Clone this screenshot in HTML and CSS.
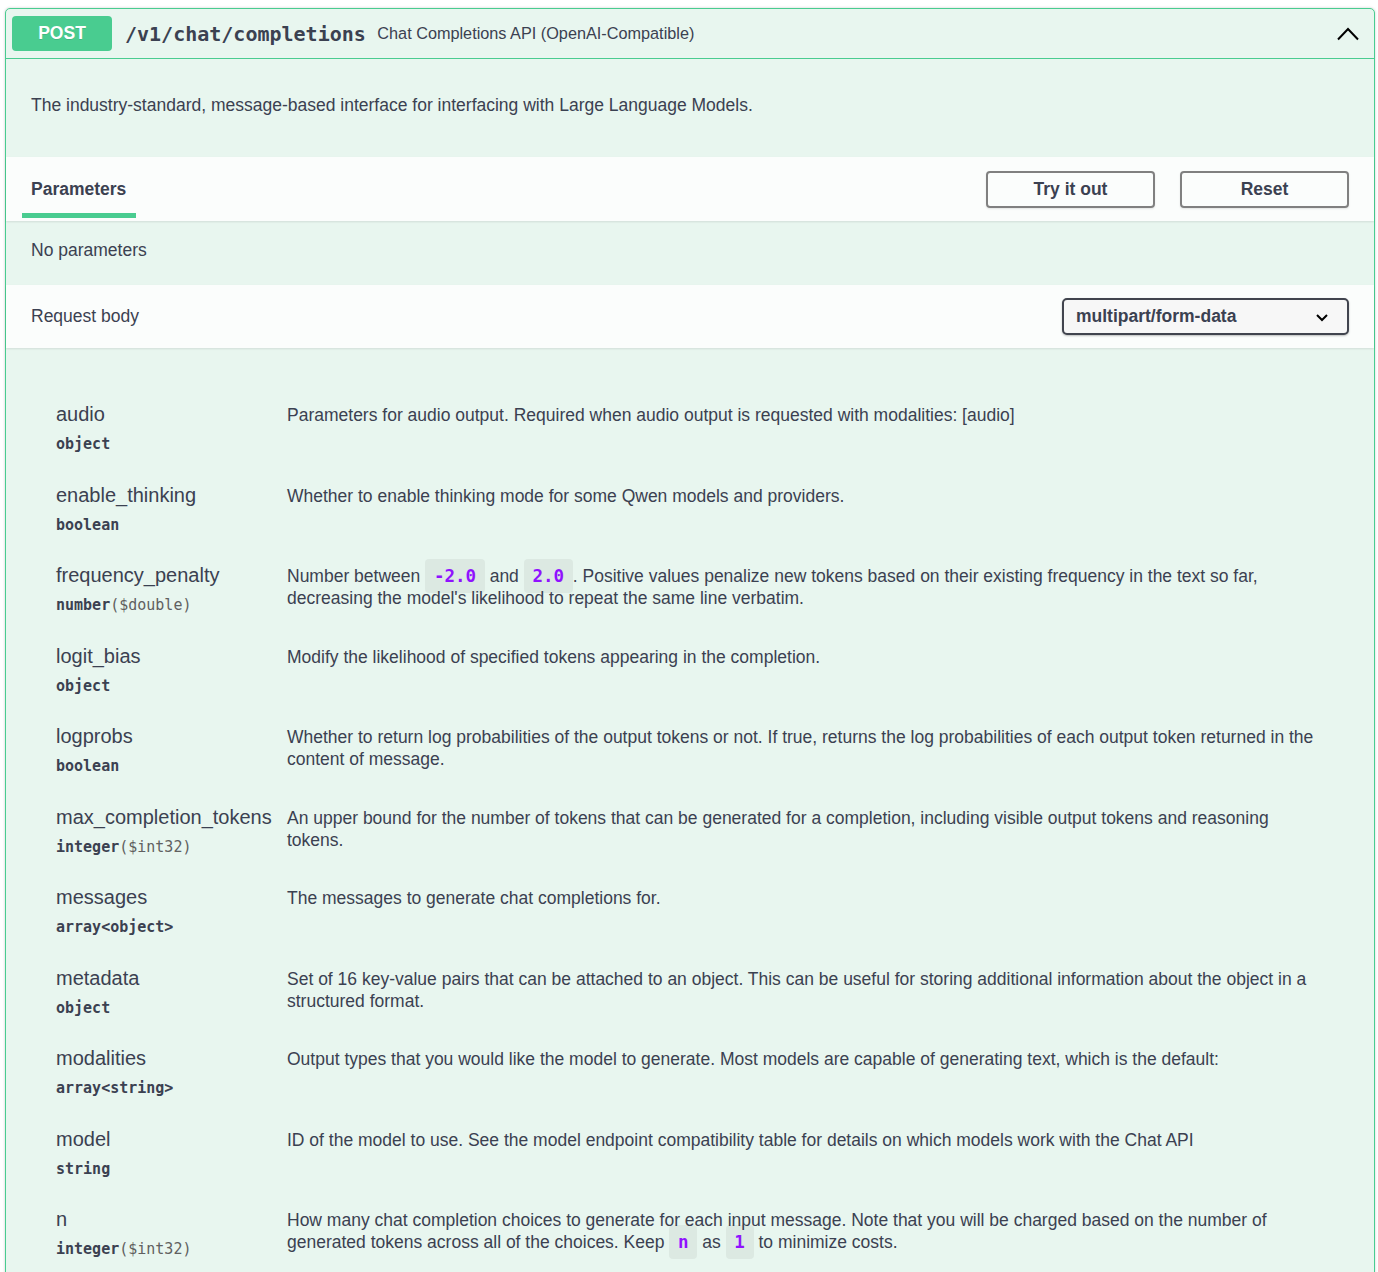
FILE: index.html
```html
<!DOCTYPE html>
<html>
<head>
<meta charset="utf-8">
<link rel="stylesheet" href="styles.css">
</head>
<body>
<div class="opblock">
  <div class="summary">
    <span class="method">POST</span>
    <span class="path">/v1/chat/completions</span>
    <span class="summary-desc">Chat Completions API (OpenAI-Compatible)</span>
    <svg class="arrow" width="24" height="16" viewBox="0 0 24 16"><polyline points="2,13.5 12,3 22,13.5" fill="none" stroke="#000" stroke-width="2"/></svg>
  </div>
  <div class="desc-wrapper">
    <p>The industry-standard, message-based interface for interfacing with Large Language Models.</p>
  </div>
  <div class="section-header">
    <div class="tab"><span class="tab-label">Parameters</span></div>
    <div class="btns">
      <button class="btn">Try it out</button>
      <button class="btn">Reset</button>
    </div>
  </div>
  <div class="no-params">No parameters</div>
  <div class="section-header rb">
    <div class="rb-title">Request body</div>
    <div class="select">
      <span>multipart/form-data</span>
      <svg width="14" height="10" viewBox="0 0 14 10"><polyline points="2,3 7,8 12,3" fill="none" stroke="#000" stroke-width="2"/></svg>
    </div>
  </div>
  <div class="props">
    <div class="row">
      <div class="pname"><div class="n">audio</div><div class="t">object</div></div>
      <div class="pdesc">Parameters for audio output. Required when audio output is requested with modalities: [audio]</div>
    </div>
    <div class="row">
      <div class="pname"><div class="n">enable_thinking</div><div class="t">boolean</div></div>
      <div class="pdesc">Whether to enable thinking mode for some Qwen models and providers.</div>
    </div>
    <div class="row">
      <div class="pname"><div class="n">frequency_penalty</div><div class="t">number<span class="fmt">($double)</span></div></div>
      <div class="pdesc">Number between <code>-2.0</code> and <code>2.0</code>. Positive values penalize new tokens based on their existing frequency in the text so far, decreasing the model's likelihood to repeat the same line verbatim.</div>
    </div>
    <div class="row">
      <div class="pname"><div class="n">logit_bias</div><div class="t">object</div></div>
      <div class="pdesc">Modify the likelihood of specified tokens appearing in the completion.</div>
    </div>
    <div class="row">
      <div class="pname"><div class="n">logprobs</div><div class="t">boolean</div></div>
      <div class="pdesc">Whether to return log probabilities of the output tokens or not. If true, returns the log probabilities of each output token returned in the content of message.</div>
    </div>
    <div class="row">
      <div class="pname"><div class="n">max_completion_tokens</div><div class="t">integer<span class="fmt">($int32)</span></div></div>
      <div class="pdesc">An upper bound for the number of tokens that can be generated for a completion, including visible output tokens and reasoning tokens.</div>
    </div>
    <div class="row">
      <div class="pname"><div class="n">messages</div><div class="t">array&lt;object&gt;</div></div>
      <div class="pdesc">The messages to generate chat completions for.</div>
    </div>
    <div class="row">
      <div class="pname"><div class="n">metadata</div><div class="t">object</div></div>
      <div class="pdesc">Set of 16 key-value pairs that can be attached to an object. This can be useful for storing additional information about the object in a structured format.</div>
    </div>
    <div class="row">
      <div class="pname"><div class="n">modalities</div><div class="t">array&lt;string&gt;</div></div>
      <div class="pdesc">Output types that you would like the model to generate. Most models are capable of generating text, which is the default:</div>
    </div>
    <div class="row">
      <div class="pname"><div class="n">model</div><div class="t">string</div></div>
      <div class="pdesc">ID of the model to use. See the model endpoint compatibility table for details on which models work with the Chat API</div>
    </div>
    <div class="row">
      <div class="pname"><div class="n">n</div><div class="t">integer<span class="fmt">($int32)</span></div></div>
      <div class="pdesc">How many chat completion choices to generate for each input message. Note that you will be charged based on the number of generated tokens across all of the choices. Keep <code>n</code> as <code>1</code> to minimize costs.</div>
    </div>
  </div>
</div>
</body>
</html>
```
FILE: styles.css
```css
html, body {
  margin: 0;
  padding: 0;
  background: #ffffff;
}
body {
  padding: 8px 3px 0 5px;
  font-family: "Liberation Sans", Arial, sans-serif;
  color: #3b4151;
  height: 1264px;
  overflow: hidden;
}
.opblock {
  border: 1px solid #49cc90;
  border-radius: 5px;
  background: #e8f6ef;
  box-shadow: 0 0 3px rgba(0,0,0,.19);
}
.summary {
  display: flex;
  align-items: center;
  padding: 7px 6px;
  border-bottom: 1px solid #49cc90;
}
.method {
  display: inline-block;
  width: 100px;
  height: 35px;
  line-height: 35px;
  text-align: center;
  background: #49cc90;
  color: #fff;
  font-weight: 700;
  font-size: 17.5px;
  border-radius: 4px;
  text-shadow: 0 1px 0 rgba(0,0,0,.1);
}
.path {
  font-family: "DejaVu Sans Mono", monospace;
  font-weight: 600;
  font-size: 20px;
  padding: 0 11.5px 0 13px;
}
.summary-desc {
  font-size: 16.25px;
  flex: 1;
}
.arrow {
  margin-right: 8px;
}
.desc-wrapper {
  padding: 18px 25px 24px;
}
.desc-wrapper p {
  margin: 18px 0;
  font-size: 17.5px;
  line-height: 20px;
}
.section-header {
  display: flex;
  align-items: center;
  justify-content: space-between;
  height: 64px;
  box-sizing: border-box;
  padding: 0 25px;
  background: rgba(255,255,255,.8);
  box-shadow: 0 1px 2px rgba(0,0,0,.1);
}
.tab-label {
  position: relative;
  font-weight: 700;
  font-size: 17.5px;
}
.tab-label::after {
  content: "";
  position: absolute;
  left: -9px;
  right: -10px;
  bottom: -19px;
  height: 5px;
  background: #49cc90;
}
.btns {
  display: flex;
  gap: 25px;
}
.btn {
  width: 169px;
  height: 37px;
  font-family: "Liberation Sans", Arial, sans-serif;
  font-weight: 700;
  font-size: 17.5px;
  color: #3b4151;
  background: transparent;
  border: 2.5px solid #808080;
  border-radius: 4px;
  box-shadow: 0 1px 2px rgba(0,0,0,.1);
  padding: 0;
}
.no-params {
  height: 64px;
  box-sizing: border-box;
  padding: 15px 25px 0;
  line-height: 28px;
  font-size: 17.5px;
}
.section-header.rb {
  height: 63px;
}
.rb-title {
  font-size: 17.5px;
}
.select {
  width: 287px;
  height: 37px;
  box-sizing: border-box;
  border: 2.5px solid #41444e;
  border-radius: 5px;
  background: #f7f7f7;
  box-shadow: 0 1px 2px 0 rgba(0,0,0,.25);
  display: flex;
  align-items: center;
  justify-content: space-between;
  padding: 0 18px 0 12px;
  font-weight: 700;
  font-size: 17.5px;
}
.props {
  padding: 42px 50px 0 50px;
}
.row {
  display: grid;
  grid-template-columns: 231px 1fr;
  height: 80.5px;
}
.pname {
  padding-top: 12px;
}
.n {
  font-size: 20px;
  line-height: 24px;
}
.t {
  margin-top: 8px;
  line-height: 20px;
  font-family: "DejaVu Sans Mono", monospace;
  font-weight: 700;
  font-size: 15px;
}
.fmt {
  font-weight: 400;
  color: #606060;
}
.pdesc {
  padding-top: 14px;
  font-size: 17.5px;
  line-height: 22px;
}
code {
  font-family: "DejaVu Sans Mono", monospace;
  font-weight: 700;
  font-size: 17.5px;
  color: #9012fe;
  background: rgba(0,0,0,.05);
  border-radius: 4px;
  padding: 7px 8.75px;
}
```
